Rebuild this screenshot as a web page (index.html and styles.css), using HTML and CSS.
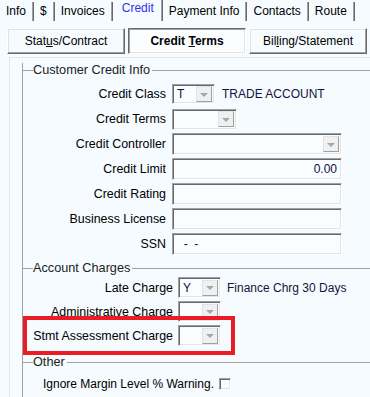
FILE: index.html
```html
<!DOCTYPE html>
<html>
<head>
<meta charset="utf-8">
<link rel="stylesheet" href="styles.css">
</head>
<body>
<div class="tabs">
  <div class="tab">Info</div>
  <div class="tab">$</div>
  <div class="tab">Invoices</div>
  <div class="tab active">Credit</div>
  <div class="tab">Payment Info</div>
  <div class="tab">Contacts</div>
  <div class="tab">Route</div>
</div>
<div class="subtabs">
  <div class="btn">Stat<u>u</u>s/Contract</div>
  <div class="btn pressed">Credit <u>T</u>erms</div>
  <div class="btn">Bil<u>l</u>ing/Statement</div>
</div>
<div class="panel">
  <div class="groups">
    <div class="legend first">Customer Credit Info</div>
    <div class="rows rows-credit">
      <div class="row"><label>Credit Class</label><div class="sel w43 h20"><span class="val">T</span><span class="drop"></span></div><span class="note">TRADE ACCOUNT</span></div>
      <div class="row"><label>Credit Terms</label><div class="sel w65 h21"><span class="val"></span><span class="drop"></span></div></div>
      <div class="row"><label>Credit Controller</label><div class="sel w170 h22"><span class="val"></span><span class="drop"></span></div></div>
      <div class="row"><label>Credit Limit</label><div class="box right">0.00</div></div>
      <div class="row"><label>Credit Rating</label><div class="box"></div></div>
      <div class="row"><label>Business License</label><div class="box"></div></div>
      <div class="row"><label>SSN</label><div class="box">&nbsp;&nbsp;-&nbsp;&nbsp;-</div></div>
    </div>
    <div class="legend second">Account Charges</div>
    <div class="rows rows-charges">
      <div class="row"><label>Late Charge</label><div class="sel w43 h21"><span class="val">Y</span><span class="drop"></span></div><span class="note">Finance Chrg 30 Days</span></div>
      <div class="row"><label>Administrative Charge</label><div class="sel w43 h21"><span class="val"></span><span class="drop"></span></div></div>
      <div class="row flag"><label>Stmt Assessment Charge</label><div class="sel w43 h21"><span class="val"></span><span class="drop"></span></div></div>
    </div>
    <div class="legend third">Other</div>
    <div class="check-row"><span>Ignore Margin Level % Warning.</span><span class="check"></span></div>
  </div>
</div>
</body>
</html>
```
FILE: styles.css
```css
html, body {
  margin: 0;
  padding: 0;
  width: 370px;
  height: 397px;
  overflow: hidden;
  background: #f5fbfe;
  font-family: "Liberation Sans", Arial, sans-serif;
  font-size: 12px;
  color: #000;
}

/* top tab strip */
.tabs {
  display: flex;
  align-items: flex-end;
  height: 21px;
}
.tab {
  box-sizing: border-box;
  height: 19px;
  line-height: 19px;
  padding: 0 7px 0 6px;
  border-right: 1px solid #696969;
  box-shadow: inset -1px 0 0 #a0a0a0;
  white-space: nowrap;
}
.tab.active {
  height: 21px;
  line-height: 17px;
  padding: 0 8px 4px 9px;
  color: #3030f0;
}

/* sub tab buttons */
.subtabs {
  display: grid;
  grid-template-columns: 118px 118px 118px;
  column-gap: 3px;
  margin-top: 7px;
  padding-left: 7px;
}
.btn {
  box-sizing: border-box;
  height: 26px;
  line-height: 24px;
  text-align: center;
  background: #f6fbfe;
  border: 1px solid;
  border-color: #ffffff #696969 #696969 #ffffff;
  box-shadow: inset -1px -1px 0 #a0a0a0, inset 1px 1px 0 #e3e3e3;
  white-space: nowrap;
}
.btn.pressed {
  font-weight: bold;
  background: #fbfdff;
  border-color: #696969 #ffffff #ffffff #696969;
  box-shadow: inset 1px 1px 0 #a0a0a0, inset -1px -1px 0 #e3e3e3;
}

/* panel */
.panel {
  margin: 3px 0 0 9px;
  border-top: 1px solid #e1e8ec;
  border-left: 1px solid #e1e8ec;
  padding: 12px 0 0 12px;
}
.groups {
  border-left: 1px solid #a0a0a0;
  padding-bottom: 6px;
}

.legend {
  display: flex;
  height: 14px;
  line-height: 14px;
  font-size: 12.7px;
  color: #222;
  white-space: nowrap;
}
.legend::before,
.legend::after {
  content: "";
  height: 1px;
  margin-top: 7px;
  background: #a0a0a0;
}
.legend::before {
  width: 10px;
  flex: none;
}
.legend::after {
  flex: 1;
  margin-left: 2px;
}
.legend.first { margin-top: -7px; }
.legend.second { margin-top: 6px; }
.legend.third { margin-top: 9px; }

.rows {
  display: flex;
  flex-direction: column;
  row-gap: 3px;
}
.rows-credit { padding-top: 6px; }
.rows-charges { padding-top: 2px; }

.row {
  display: flex;
  align-items: center;
  height: 22px;
  column-gap: 6px;
}
.rows-charges .row {
  height: 21px;
  column-gap: 5px;
}
.row label {
  flex: none;
  width: 143px;
  text-align: right;
  white-space: nowrap;
  font-size: 12.4px;
}
.rows-charges .row label {
  width: 150px;
}

/* sunken controls */
.sel, .box, .check {
  box-sizing: border-box;
  border: 1px solid;
  border-color: #a0a0a0 #ffffff #ffffff #a0a0a0;
  box-shadow: inset 1px 1px 0 #696969, inset -1px -1px 0 #e3e3e3;
  background: #fafdff;
  color: #101040;
}
.sel {
  display: flex;
  align-items: center;
  padding: 0 2px 0 4px;
}
.w43 { width: 43px; }
.w65 { width: 65px; }
.w170 { width: 170px; }
.h20 { height: 20px; }
.h21 { height: 21px; }
.h22 { height: 22px; }
.val {
  flex: 1;
}
.drop {
  box-sizing: border-box;
  flex: none;
  width: 16px;
  height: 16px;
  background: #f0f0f0;
  border: 1px solid;
  border-color: #e3e3e3 #a0a0a0 #a0a0a0 #e3e3e3;
  display: flex;
  align-items: center;
  justify-content: center;
}
.drop::after {
  content: "";
  width: 0;
  height: 0;
  border-left: 4px solid transparent;
  border-right: 4px solid transparent;
  border-top: 4px solid #a7a7a7;
  margin-top: 1px;
}
.note {
  margin-left: 1px;
  color: #14143c;
  white-space: nowrap;
}
.box {
  width: 170px;
  height: 22px;
  line-height: 20px;
  padding: 0 4px;
  white-space: nowrap;
}
.box.right {
  text-align: right;
}

/* highlight annotation */
.row.flag {
  position: relative;
}
.row.flag::after {
  content: "";
  position: absolute;
  left: 0;
  top: -9px;
  width: 212px;
  height: 39px;
  box-sizing: border-box;
  border: 4px solid #ec1c24;
}

/* other */
.check-row {
  display: flex;
  align-items: center;
  column-gap: 5px;
  height: 14px;
  margin-top: 8px;
  padding-left: 20px;
  white-space: nowrap;
}
.check {
  width: 12px;
  height: 12px;
}
```
